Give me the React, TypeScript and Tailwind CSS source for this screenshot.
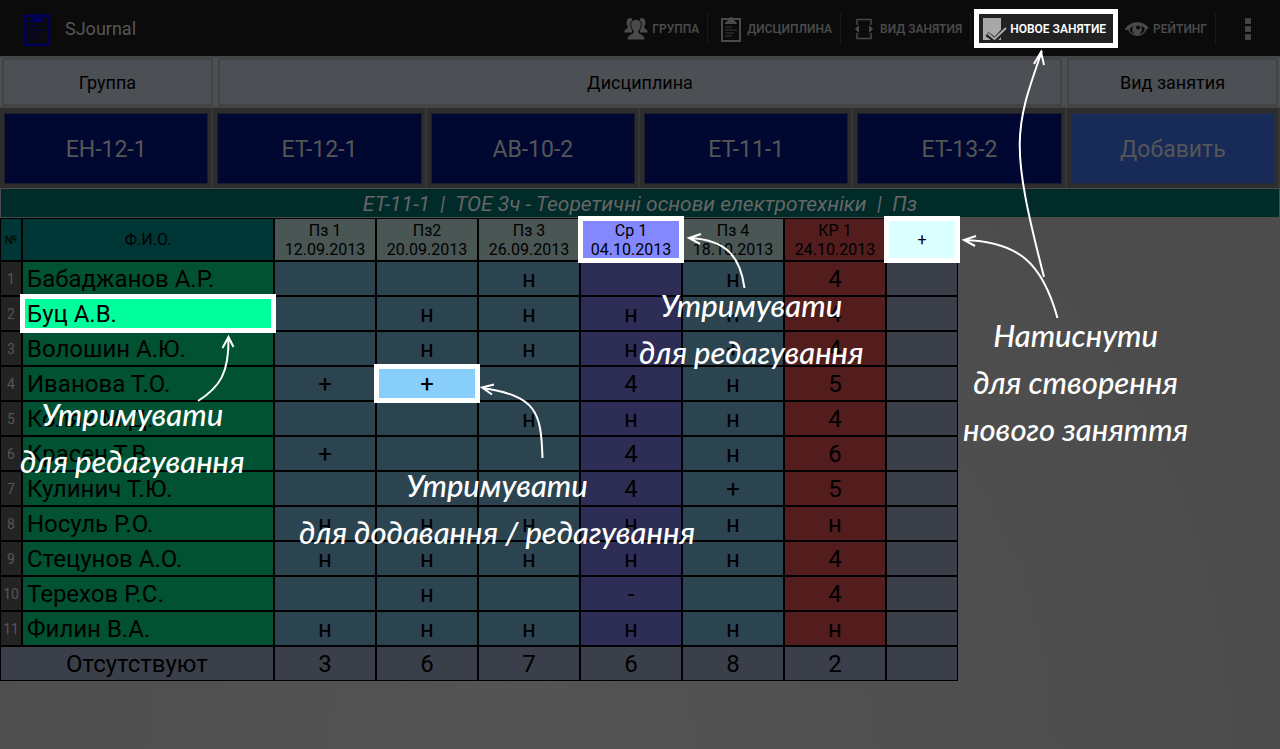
import type { ReactNode } from "react";

const groups = ["ЕН-12-1", "ЕТ-12-1", "АВ-10-2", "ЕТ-11-1", "ЕТ-13-2"];

type Lesson = { title: string; date: string; head: string; cell: string; absent: number; marked?: boolean };

const practice = { head: "bg-[#4a5654]", cell: "bg-[#2c4350]" };

const lessons: Lesson[] = [
  { title: "Пз 1", date: "12.09.2013", ...practice, absent: 3 },
  { title: "Пз2", date: "20.09.2013", ...practice, absent: 6 },
  { title: "Пз 3", date: "26.09.2013", ...practice, absent: 7 },
  { title: "Ср 1", date: "04.10.2013", head: "bg-[#8488ff]", cell: "bg-[#2d2d56]", absent: 6, marked: true },
  { title: "Пз 4", date: "18.10.2013", ...practice, absent: 8 },
  { title: "КР 1", date: "24.10.2013", head: "bg-[#531d1e]", cell: "bg-[#531d1e]", absent: 2 },
];

const students: { name: string; marks: string[] }[] = [
  { name: "Бабаджанов А.Р.", marks: ["", "", "н", "", "н", "4"] },
  { name: "Буц А.В.", marks: ["", "н", "н", "н", "н", "4"] },
  { name: "Волошин А.Ю.", marks: ["", "н", "н", "н", "+", "4"] },
  { name: "Иванова Т.О.", marks: ["+", "+", "", "4", "н", "5"] },
  { name: "Коляк М.Д.", marks: ["", "", "н", "н", "н", "4"] },
  { name: "Красен Т.В.", marks: ["+", "", "", "4", "н", "6"] },
  { name: "Кулинич Т.Ю.", marks: ["", "", "", "4", "+", "5"] },
  { name: "Носуль Р.О.", marks: ["н", "н", "н", "н", "н", "н"] },
  { name: "Стецунов А.О.", marks: ["н", "н", "н", "н", "н", "4"] },
  { name: "Терехов Р.С.", marks: ["", "н", "", "-", "", "4"] },
  { name: "Филин В.А.", marks: ["н", "н", "н", "н", "н", "н"] },
];

function Clipboard({ className }: { className: string }) {
  return (
    <svg viewBox="0 0 20 26" preserveAspectRatio="none" className={className} aria-hidden="true">
      <path d="M1 3h18v22H1z" fill="none" stroke="currentColor" strokeWidth="2" />
      <path d="M4 8c0-2 3-3 4-5a2 2 0 0 1 4 0c1 2 4 3 4 5z" fill="currentColor" />
      <path d="M4 11h7M4 14h12M4 17h9M4 20h7" fill="none" stroke="currentColor" strokeWidth=".8" />
    </svg>
  );
}

function People() {
  return (
    <svg viewBox="0 0 24 24" className="h-6 w-6" fill="currentColor" aria-hidden="true">
      <path d="M7 1C4 1 2.300 3 2.600 6c.2 2 .6 3 1.500 4C3.500 12 .5 12 0 15.500h8V2zM17 1c3 0 4.700 2 4.400 5-.2 2-.6 3-1.500 4 .6 2 3.600 2 4.100 5.500h-8V2z" />
      <path
        d="M12 2.500c-3.800 0-5.700 2.700-5.200 6.300.3 2.200 1 3.600 2.200 4.800V16c-2 1.500-5.500 1.500-6 7h18c-.5-5.500-4-5.500-6-7v-2.400c1.200-1.200 1.900-2.600 2.200-4.800.5-3.600-1.400-6.300-5.200-6.300z"
        stroke="#0b0b0b"
        strokeWidth="1"
      />
    </svg>
  );
}

function Brackets() {
  return (
    <svg viewBox="0 0 24 24" className="h-6 w-6" aria-hidden="true">
      <path d="M5 8V2.500h14V8M5 16v5.500h14V16" fill="none" stroke="currentColor" strokeWidth="1.500" />
      <path d="M7 8v8l-4-4zM17 8v8l4-4z" fill="currentColor" />
    </svg>
  );
}

function CheckedSheet() {
  return (
    <svg viewBox="0 0 24 24" className="h-6 w-6 overflow-visible" aria-hidden="true">
      <path d="M1 1h18v22H1z" fill="#a8a8a8" />
      <path d="m5 17 8 6L24 11" fill="none" stroke="#222" strokeWidth="5" />
      <path d="m6 16.500 6.500 5.500L24 11" fill="none" stroke="#aaa" strokeWidth="2" />
    </svg>
  );
}

function Eye() {
  return (
    <svg viewBox="0 0 24 24" className="h-6 w-6" aria-hidden="true">
      <path
        fillRule="evenodd"
        d="M0 12C5 3.500 18 3 24 11l-2 1c-4 9-15 9-19 1L0 13zM4.500 12.500c1 3 3.500 4.500 5.500 5-3-2-3.500-6-1.500-8.500-2 .7-3.200 2-4 3.500zM16 9c1.500 3 .8 6.500-2 8.500 2.800-.6 5-2.500 6-5.500-.8-1.200-2-2.300-4-3z"
        fill="currentColor"
      />
      <circle cx="13" cy="10.500" r="2" fill="#0b0b0b" />
    </svg>
  );
}

function Action({ icon, label, lit }: { icon: ReactNode; label: string; lit?: boolean }) {
  return (
    <div className="relative flex items-center">
      <button
        type="button"
        className={
          lit
            ? "relative z-20 flex h-8 items-center gap-1 pl-[11px] pr-2 text-xs font-semibold text-white"
            : "flex h-8 items-center gap-1 border-r border-[#181818] pl-[11px] pr-2 text-xs font-semibold text-[#4a4a4a]"
        }
      >
        {icon}
        {label}
      </button>
      {lit && <span className="absolute -right-1 -top-1 bottom-[-3px] left-[3px] z-10 border-5 border-white bg-[#222]" />}
    </div>
  );
}

function Frame() {
  return <span className="pointer-events-none absolute -inset-[3px] z-10 border-5 border-white" />;
}

function Note({ lines, className }: { lines: string[]; className: string }) {
  return (
    <p
      lang="uk"
      className={`absolute z-20 text-center font-[Lato,sans-serif] text-[31px]/[47px] font-medium italic whitespace-nowrap text-white ${className}`}
    >
      {lines.map((line) => (
        <span key={line} className="block">
          {line}
        </span>
      ))}
    </p>
  );
}

function Arrows() {
  return (
    <svg
      className="pointer-events-none absolute left-0 top-0 z-20"
      width="1280"
      height="749"
      fill="none"
      stroke="white"
      strokeWidth="2"
      aria-hidden="true"
    >
      <path d="M198 401C220 387 229 373 228.500 338M222.500 348l6-11 5 10" />
      <path d="M542.500 458C541 412 537 396 482 388M494 384.500l-12 3 10 7" />
      <path d="M744.500 288C740 255 725 240 690 238M701 234l-12 4 11 6" />
      <path d="M1057.500 318C1042 262 1018 242 965 240M976 236l-12 4 11 6" />
      <path d="M1044 277C1010 145 1014 130 1042 51M1034 64l7-12 3 13" />
    </svg>
  );
}

const cellBase = "relative border border-black p-0 font-normal";
const rowText = "pt-0.5 leading-[31px]";
const tab = "border-2 border-[#424447] pt-px";

export default function App() {
  return (
    <div className="relative min-h-screen overflow-hidden bg-[radial-gradient(ellipse_at_40%_100%,#545454,#4c4c4c_70%)] font-[Roboto,sans-serif] text-black">
      <header className="flex h-14 items-center bg-[#0b0b0b] pt-0.5">
        <Clipboard className="ml-6 h-[34px] w-[26px] text-[#00005a]" />
        <h1 className="ml-[15px] text-lg text-[#565656]">SJournal</h1>
        <nav className="ml-auto flex items-center">
          <Action icon={<People />} label="ГРУППА" />
          <Action icon={<Clipboard className="mx-0.5 h-[26px] w-5" />} label="ДИСЦИПЛИНА" />
          <Action icon={<Brackets />} label="ВИД ЗАНЯТИЯ" />
          <Action icon={<CheckedSheet />} label="НОВОЕ ЗАНЯТИЕ" lit />
          <Action icon={<Eye />} label="РЕЙТИНГ" />
          <button type="button" aria-label="Меню" className="flex w-16 flex-col items-center gap-0.5">
            <span className="size-1.5 bg-[#444]" />
            <span className="size-1.5 bg-[#444]" />
            <span className="size-1.5 bg-[#444]" />
          </button>
        </nav>
      </header>

      <div className="grid h-[52px] grid-cols-[1fr_4fr_1fr] gap-[5px] border-y-2 border-[#454545] bg-[#4c4f54] px-0.5 text-lg">
        <button type="button" className={tab}>Группа</button>
        <button type="button" className={tab}>Дисциплина</button>
        <button type="button" className={tab}>Вид занятия</button>
      </div>

      <div className="grid h-20 grid-cols-6 bg-[#2d2d2d] text-[23px] text-[#565656]">
        {groups.map((group) => (
          <div key={group} className="flex border-r-2 border-[#363636] pb-1 pl-1 pr-[3px] pt-[5px]">
            <button type="button" className="grow border border-[#1b1d28] bg-[#000832] pt-1">
              {group}
            </button>
          </div>
        ))}
        <div className="flex border-r-2 border-[#363636] pb-1 pl-1 pr-[3px] pt-[5px]">
          <button type="button" className="grow border border-[#252d40] bg-[#182a57] pt-1">
            Добавить
          </button>
        </div>
      </div>

      <h2 className="h-[30px] border border-[#4c4c4c] bg-[#002b29] pt-px text-center text-[21px]/7 italic whitespace-pre text-[#666]">
        {"ЕТ-11-1  |  ТОЕ 3ч - Теоретичні основи електротехніки  |  Пз"}
      </h2>

      <table className="w-[958px] table-fixed border-separate border-spacing-0 text-center text-2xl">
        <colgroup>
          <col className="w-[22px]" />
          <col className="w-[252px]" />
          {lessons.map((lesson) => (
            <col key={lesson.date} className="w-[102px]" />
          ))}
          <col className="w-[72px]" />
        </colgroup>
        <thead>
          <tr className="h-[43px]">
            <th className={`${cellBase} bg-[#003636] text-xs`}>№</th>
            <th className={`${cellBase} bg-[#003636] text-base`}>Ф.И.О.</th>
            {lessons.map((lesson) => (
              <th key={lesson.date} className={`${cellBase} ${lesson.head} text-base/[19px]`}>
                {lesson.title}
                <br />
                {lesson.date}
                {lesson.marked && <Frame />}
              </th>
            ))}
            <th className={`${cellBase} bg-[#dcffff] text-base`}>
              <button type="button" aria-label="Добавить занятие">+</button>
              <Frame />
            </th>
          </tr>
        </thead>
        <tbody>
          {students.map((student, row) => (
            <tr key={student.name} className="h-[35px]">
              <td className={`${cellBase} bg-[#232323] text-sm text-[#565656]`}>{row + 1}</td>
              <th
                scope="row"
                className={`${cellBase} ${rowText} pl-1 text-left ${row === 1 ? "bg-[#00ff9c]" : "bg-[#005232]"}`}
              >
                {student.name}
                {row === 1 && <Frame />}
              </th>
              {student.marks.map((mark, column) => {
                const chosen = row === 3 && column === 1;
                return (
                  <td
                    key={lessons[column].date}
                    className={`${cellBase} ${rowText} ${chosen ? "bg-[#87cefa]" : lessons[column].cell}`}
                  >
                    {mark}
                    {chosen && <Frame />}
                  </td>
                );
              })}
              <td className={`${cellBase} bg-[#3a3f49]`} />
            </tr>
          ))}
        </tbody>
        <tfoot>
          <tr className="h-[35px]">
            <th colSpan={2} className={`${cellBase} ${rowText} bg-[#3a3f49]`}>Отсутствуют</th>
            {lessons.map((lesson) => (
              <td key={lesson.date} className={`${cellBase} ${rowText} bg-[#3a3f49]`}>{lesson.absent}</td>
            ))}
            <td className={`${cellBase} bg-[#3a3f49]`} />
          </tr>
        </tfoot>
      </table>

      <Arrows />
      <Note className="left-5 top-[391px]" lines={["Утримувати", "для редагування"]} />
      <Note className="left-[299px] top-[462px]" lines={["Утримувати", "для додавання / редагування"]} />
      <Note className="left-[639px] top-[282px]" lines={["Утримувати", "для редагування"]} />
      <Note className="left-[963px] top-[312px]" lines={["Натиснути", "для створення", "нового заняття"]} />
    </div>
  );
}
